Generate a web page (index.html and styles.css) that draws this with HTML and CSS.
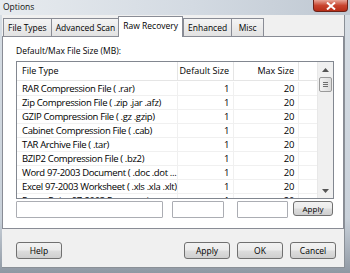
FILE: index.html
```html
<!DOCTYPE html>
<html lang="en">
<head>
    <meta charset="UTF-8">
    <title>Options</title>
    <link rel="stylesheet" href="styles.css">
</head>
<body>
<div class="window">
    <div class="titlebar">
        <span class="title">Options</span>
        <div class="close">
            <svg width="10" height="8" viewBox="0 0 10 8"><path d="M1 0.5 L9 7.5 M9 0.5 L1 7.5" stroke="#fff" stroke-width="2"/></svg>
        </div>
    </div>

    <div class="client">
        <div class="tabs">
            <div class="tab">File Types</div>
            <div class="tab">Advanced Scan</div>
            <div class="tab active">Raw Recovery</div>
            <div class="tab">Enhanced</div>
            <div class="tab">Misc</div>
        </div>

        <div class="panel">
            <div class="label">Default/Max File Size (MB):</div>

            <div class="list">
                <div class="rows">
                    <div class="row head">
                        <div class="cell">File Type</div>
                        <div class="cell num">Default Size</div>
                        <div class="cell num">Max Size</div>
                        <div class="cell"></div>
                    </div>
                    <div class="row"><div class="cell">RAR Compression File ( .rar)</div><div class="cell num">1</div><div class="cell num">20</div><div class="cell"></div></div>
                    <div class="row"><div class="cell">Zip Compression File ( .zip .jar .afz)</div><div class="cell num">1</div><div class="cell num">20</div><div class="cell"></div></div>
                    <div class="row"><div class="cell">GZIP Compression File ( .gz .gzip)</div><div class="cell num">1</div><div class="cell num">20</div><div class="cell"></div></div>
                    <div class="row"><div class="cell">Cabinet Compression File ( .cab)</div><div class="cell num">1</div><div class="cell num">20</div><div class="cell"></div></div>
                    <div class="row"><div class="cell">TAR Archive File ( .tar)</div><div class="cell num">1</div><div class="cell num">20</div><div class="cell"></div></div>
                    <div class="row"><div class="cell">BZIP2 Compression File ( .bz2)</div><div class="cell num">1</div><div class="cell num">20</div><div class="cell"></div></div>
                    <div class="row"><div class="cell">Word 97-2003 Document ( .doc .dot ...</div><div class="cell num">1</div><div class="cell num">20</div><div class="cell"></div></div>
                    <div class="row"><div class="cell">Excel 97-2003 Worksheet ( .xls .xla .xlt)</div><div class="cell num">1</div><div class="cell num">20</div><div class="cell"></div></div>
                    <div class="row"><div class="cell">PowerPoint 97-2003 Presentation ...</div><div class="cell num">1</div><div class="cell num">20</div><div class="cell"></div></div>
                </div>
                <div class="scrollbar">
                    <div class="arrow">
                        <svg width="7" height="4" viewBox="0 0 7 4"><path d="M0 4 L3.5 0 L7 4 Z" fill="#555"/></svg>
                    </div>
                    <div class="track">
                        <div class="thumb"><span></span><span></span><span></span></div>
                    </div>
                    <div class="arrow">
                        <svg width="7" height="4" viewBox="0 0 7 4"><path d="M0 0 L3.5 4 L7 0 Z" fill="#555"/></svg>
                    </div>
                </div>
            </div>

            <div class="edit-row">
                <input class="edit name" type="text">
                <input class="edit def" type="text">
                <input class="edit max" type="text">
                <button class="btn small">Apply</button>
            </div>
        </div>

        <div class="footer">
            <button class="btn">Help</button>
            <div class="spacer"></div>
            <button class="btn">Apply</button>
            <button class="btn">OK</button>
            <button class="btn">Cancel</button>
        </div>
    </div>
</div>
</body>
</html>
```

FILE: styles.css
```css
body {
    margin: 0;
    padding: 0;
    font-family: "Open Sans", "Noto Sans", sans-serif;
    font-size: 8.5px;
    color: #000;
    background-color: #a9b1ba;
    overflow: hidden;
}

.window {
    width: 350px;
    height: 273px;
    display: flex;
    flex-direction: column;
    background: linear-gradient(to bottom, #d7dee5, #c9d1da 80%, #8f98a3);
}

/* title bar */
.titlebar {
    height: 15px;
    display: flex;
    align-items: flex-start;
    justify-content: space-between;
    background: linear-gradient(to right, #e7ebef, #d3dae2 55%, #bfc8d2);
}

.title {
    padding: 1px 0 0 3px;
    line-height: 12px;
    font-size: 8.5px;
    color: #111;
}

.close {
    width: 33px;
    height: 11px;
    margin-right: 2px;
    display: flex;
    align-items: center;
    justify-content: center;
    background: linear-gradient(to bottom, #e8a597, #c8452f 50%, #b72d17);
    border: 1px solid #6c2218;
    border-top: none;
    border-radius: 0 0 4px 4px;
}

/* client area */
.client {
    flex: 1;
    margin: 0 5px 5px 2px;
    background-color: #f0f0f0;
    display: flex;
    flex-direction: column;
    border-right: 1px solid #8a9097;
    border-bottom: 1px solid #8a9097;
}

.tabs {
    display: flex;
    align-items: flex-end;
    height: 21px;
    padding: 0 0 0 1px;
}

.tab {
    height: 18px;
    min-width: 33px;
    padding: 0 4px;
    line-height: 17px;
    font-size: 8.5px;
    text-align: center;
    border: 1px solid #898c95;
    border-bottom: none;
    margin-right: -1px;
    background: linear-gradient(to bottom, #f4f4f4, #e2e2e2);
    box-sizing: border-box;
}

.tab.active {
    height: 21px;
    background: #fff;
    position: relative;
    z-index: 1;
    margin-bottom: -1px;
    padding: 0 4px;
    line-height: 17px;
    margin-left: -1px;
    margin-right: 0;
}

.panel {
    height: 193px;
    background-color: #fff;
    border: 1px solid #898c95;
    box-sizing: border-box;
    padding: 7px 9px 0 13px;
    display: flex;
    flex-direction: column;
}

.label {
    line-height: 14px;
    height: 17px;
    font-size: 8.5px;
}

/* list view */
.list {
    display: flex;
    height: 138px;
    border: 1px solid #828790;
    box-sizing: border-box;
    overflow: hidden;
    font-size: 9.5px;
}

.rows {
    flex: 1;
    overflow: hidden;
}

.row {
    display: grid;
    grid-template-columns: 161px 56px 65px 1fr;
    height: 14px;
    line-height: 13px;
    border-bottom: 1px solid #f0f0f0;
    box-sizing: border-box;
    letter-spacing: -0.35px;
}

.row.head {
    height: 19px;
    line-height: 18px;
    border-bottom: 1px solid #e5e5e5;
    margin-bottom: 1px;
    font-size: 9px;
    letter-spacing: 0;
}

.cell {
    padding: 0 1px 0 5px;
    white-space: nowrap;
    overflow: hidden;
    border-right: 1px solid #f0f0f0;
}

.head .cell {
    border-right: 1px solid #e5e5e5;
}

.cell.num {
    text-align: right;
    padding: 0 4px 0 1px;
}

.row .cell:last-child {
    border-right: none;
}

.scrollbar {
    width: 15px;
    display: flex;
    flex-direction: column;
    background-color: #f0f0f0;
    border-left: 1px solid #e8e8e8;
}

.arrow {
    height: 15px;
    display: flex;
    align-items: center;
    justify-content: center;
}

.track {
    flex: 1;
}

.thumb {
    margin: 0 1px;
    height: 15px;
    border: 1px solid #9a9a9a;
    border-radius: 2px;
    background: linear-gradient(to right, #f3f3f3, #dcdcdc);
    box-sizing: border-box;
    display: flex;
    flex-direction: column;
    align-items: center;
    justify-content: center;
    gap: 1px;
}

.thumb span {
    width: 5px;
    height: 1px;
    background-color: #6e6e6e;
}

/* edit row */
.edit-row {
    display: flex;
    align-items: flex-start;
    margin-top: 2px;
    height: 17px;
}

.edit {
    height: 17px;
    border: 1px solid #abadb3;
    border-radius: 1px;
    box-sizing: border-box;
    padding: 0;
    margin: 0;
    background: #fff;
}

.edit.name {
    width: 147px;
    margin-right: 9px;
}

.edit.def {
    width: 52px;
    margin-right: 13px;
}

.edit.max {
    width: 51px;
    margin-right: 5px;
}

/* buttons */
.btn {
    font-family: "Open Sans", "Noto Sans", sans-serif;
    font-size: 8.5px;
    height: 17px;
    width: 46px;
    padding: 0;
    margin: 0;
    border: 1px solid #707070;
    border-radius: 3px;
    background: linear-gradient(to bottom, #f2f2f2 0%, #ebebeb 48%, #dddddd 52%, #cfcfcf 100%);
    color: #000;
    box-sizing: border-box;
    line-height: 14px;
}

.btn.small {
    width: 40px;
    height: 15px;
    line-height: 12px;
    font-size: 8px;
}

.footer {
    flex: 1;
    display: flex;
    align-items: flex-start;
    padding: 13px 8px 0 14px;
    gap: 7px;
}

.footer .spacer {
    flex: 1;
}
```
